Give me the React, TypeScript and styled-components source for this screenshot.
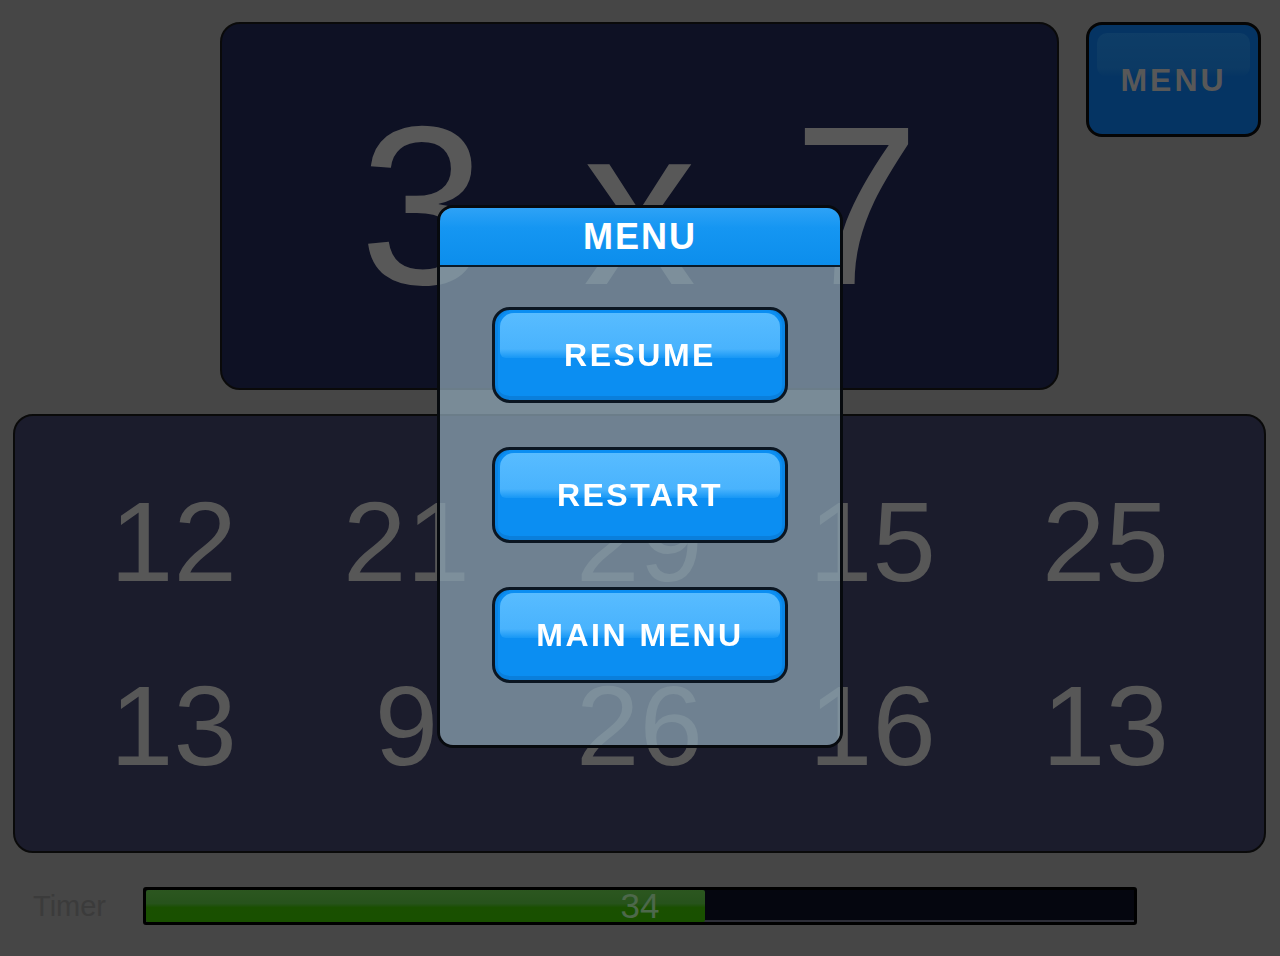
import React from 'react'
import styled, { createGlobalStyle } from 'styled-components'

const answers = [12, 21, 29, 15, 25, 13, 9, 26, 16, 13]
const timeLeft = 34
const timeTotal = 60

function App() {
  return (
    <>
      <GlobalStyle />
      <Page>
        <TopRow>
          <Question>
            <span>3</span>
            <span>x</span>
            <span>7</span>
          </Question>
          <CornerButton>
            <span>MENU</span>
          </CornerButton>
        </TopRow>
        <Answers>
          {answers.map((n, i) => (
            <Answer key={i}>{n}</Answer>
          ))}
        </Answers>
        <TimerRow>
          <TimerLabel>Timer</TimerLabel>
          <Track>
            <Fill style={{ width: `${(timeLeft / timeTotal) * 100 - 0.1}%` }} />
            <TimeText>{timeLeft}</TimeText>
          </Track>
        </TimerRow>
      </Page>

      <Backdrop>
        <Dialog>
          <DialogHeader>MENU</DialogHeader>
          <DialogBody>
            <MenuButton>
              <span>RESUME</span>
            </MenuButton>
            <MenuButton>
              <span>RESTART</span>
            </MenuButton>
            <MenuButton>
              <span>MAIN MENU</span>
            </MenuButton>
          </DialogBody>
        </Dialog>
      </Backdrop>
    </>
  )
}

export default App

const GlobalStyle = createGlobalStyle`
  * { box-sizing: border-box; }
  html, body {
    margin: 0;
    padding: 0;
    width: 1280px;
    height: 956px;
    overflow: hidden;
    background: #8c8c8c;
    font-family: "Liberation Sans", Arial, sans-serif;
  }
`

const Page = styled.div`
  width: 1280px;
  height: 956px;
  padding: 22px 14px 0 13px;
  display: flex;
  flex-direction: column;
`

const TopRow = styled.div`
  display: grid;
  grid-template-columns: 1fr 839px 1fr;
  height: 368px;
`

const Question = styled.div`
  grid-column: 2;
  height: 368px;
  background: #1c2248;
  border: 2px solid #141414;
  border-radius: 20px;
  padding-top: 68px;
  display: flex;
  justify-content: center;
  align-items: flex-start;
  gap: 97px;
  color: #b0b0b0;
  font-size: 227px;
  line-height: 1;
  overflow: hidden;
`

const CornerButton = styled.div`
  grid-column: 3;
  justify-self: end;
  margin-right: 5px;
  position: relative;
  isolation: isolate;
  width: 175px;
  height: 115px;
  border: 3px solid #0a0a0a;
  border-radius: 16px;
  background: #0a68c6;
  display: flex;
  align-items: center;
  justify-content: center;
  color: #b0b0b0;
  font-weight: bold;
  font-size: 32px;
  letter-spacing: 3px;
  overflow: hidden;

  &::before {
    content: '';
    position: absolute;
    top: 8px;
    left: 8px;
    right: 8px;
    height: 44px;
    border-radius: 10px;
    background: linear-gradient(#1c7ace, #1874c8 80%, rgba(24, 116, 200, 0));
    z-index: -1;
  }

  span {
    margin-top: 2px;
  }
`

const Answers = styled.div`
  margin-top: 24px;
  height: 439px;
  background: #363858;
  border: 2px solid #141414;
  border-radius: 20px;
  padding-top: 34px;
  display: grid;
  grid-template-columns: repeat(5, 233px);
  grid-auto-rows: 184px;
  justify-content: center;
`

const Answer = styled.div`
  text-align: center;
  font-size: 114px;
  line-height: 184px;
  color: #aeaeae;
`

const TimerRow = styled.div`
  margin-top: 34px;
  display: flex;
  align-items: center;
  height: 38px;
`

const TimerLabel = styled.div`
  width: 130px;
  padding-left: 20px;
  font-size: 29px;
  color: #767676;
`

const Track = styled.div`
  position: relative;
  width: 994px;
  height: 38px;
  border: 3px solid #000;
  border-radius: 3px;
  background: #0a0c1e;
  box-shadow: inset 0 -2px 0 #5a5c70;
  overflow: hidden;
`

const Fill = styled.div`
  height: 100%;
  border-radius: 2px;
  background: linear-gradient(#58ae40 0%, #4ea638 42%, #34a000 55%, #32a000 100%);
`

const TimeText = styled.div`
  position: absolute;
  inset: 0;
  display: flex;
  align-items: center;
  justify-content: center;
  font-size: 35px;
  color: #9ad096;
`

const Backdrop = styled.div`
  position: fixed;
  inset: 0;
  background: rgba(0, 0, 0, 0.5);
  display: flex;
  align-items: center;
  justify-content: center;
  padding-bottom: 3px;
`

const Dialog = styled.div`
  width: 406px;
  height: 543px;
  border: 3px solid #070a0e;
  border-radius: 16px;
  overflow: hidden;
  display: flex;
  flex-direction: column;
`

const DialogHeader = styled.div`
  height: 59px;
  flex-shrink: 0;
  background: linear-gradient(#2ea2f6 0%, #1596f2 35%, #0c8eec 100%);
  border-bottom: 2px solid #0a1a28;
  display: flex;
  align-items: center;
  justify-content: center;
  color: #fff;
  font-weight: bold;
  font-size: 36px;
  letter-spacing: 2px;
`

const DialogBody = styled.div`
  flex: 1;
  background: rgba(137, 160, 176, 0.77);
  padding-top: 40px;
  display: flex;
  flex-direction: column;
  align-items: center;
  gap: 44px;
`

const MenuButton = styled.button`
  position: relative;
  isolation: isolate;
  width: 296px;
  height: 96px;
  border: 3px solid #0b1622;
  border-radius: 18px;
  background: #0b8ef2;
  box-shadow: inset 0 -4px 0 #0a7fdc, inset 3px 0 0 #0a84e4, inset -3px 0 0 #0a84e4;
  display: flex;
  align-items: center;
  justify-content: center;
  color: #fff;
  font-family: "Liberation Sans", Arial, sans-serif;
  font-weight: bold;
  font-size: 32px;
  letter-spacing: 2.5px;
  padding: 0;
  overflow: hidden;

  &::before {
    content: '';
    position: absolute;
    top: 3px;
    left: 5px;
    right: 5px;
    height: 50%;
    border-radius: 14px 14px 6px 6px;
    background: linear-gradient(#58bcff, #49b3fd 80%, rgba(40, 165, 250, 0.4) 100%);
    z-index: -1;
  }
`
